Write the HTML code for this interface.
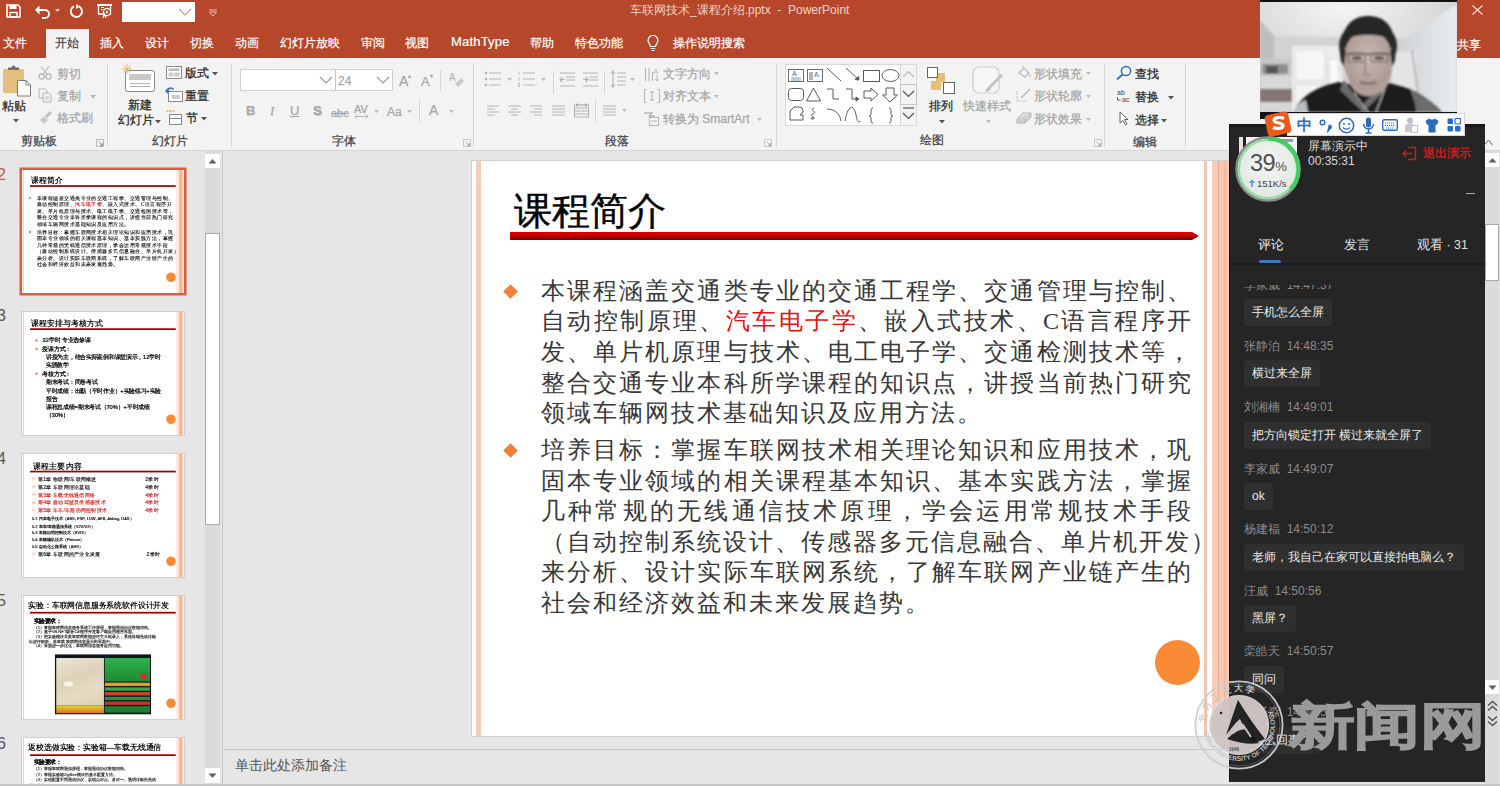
<!DOCTYPE html>
<html><head><meta charset="utf-8">
<style>
*{margin:0;padding:0;box-sizing:border-box}
html,body{width:1500px;height:786px;overflow:hidden;background:#e6e6e6;font-family:"Liberation Sans",sans-serif;}
.a{position:absolute}
.t{position:absolute;white-space:nowrap;line-height:1}
#title{left:0;top:0;width:1500px;height:58px;background:#b7472a}
.tab{position:absolute;top:36px;font-size:12px;color:#fff;line-height:14px;white-space:nowrap;-webkit-text-stroke:0.2px currentColor}
#ribbon{left:0;top:58px;width:1500px;height:93px;background:#f3f3f3;border-bottom:1px solid #d4d4d4}
.sep{position:absolute;width:1px;background:#d5d5d5}
.lbl{position:absolute;font-size:12px;color:#444;white-space:nowrap;line-height:14px;-webkit-text-stroke:0.25px currentColor}
.g{color:#a6a6a6}
#thumbs{left:0;top:151px;width:223px;height:633px;background:#e6e6e6;overflow:hidden}
#main{left:224px;top:151px;width:1261px;height:635px;background:#e6e6e6}
#slide{left:472px;top:161px;width:800px;height:575px;background:#fff;box-shadow:0 0 0 1px #d0d0d0}
.bl{position:absolute;left:69px;width:652px;font-family:"Liberation Serif",serif;font-size:24px;line-height:30px;letter-spacing:2px;color:#383838;white-space:nowrap}
.j{text-align:justify;text-align-last:justify}
#chat{left:1229px;top:124px;width:256px;height:658px;background:#252525;box-shadow:inset 1px 0 0 #141414}
</style></head><body>
<!-- title bar -->
<div id="title" class="a">
  <div class="t" style="left:630px;top:4px;font-size:12px;color:#f2d4cc">车联网技术_课程介绍.pptx&nbsp;&nbsp;-&nbsp;&nbsp;PowerPoint</div>
  <div class="a" style="left:122px;top:2px;width:73px;height:20px;background:#fff"></div>
  <div class="a" style="left:46px;top:29px;width:43px;height:29px;background:#f3f3f3"></div>

  <!-- QAT icons -->
  <svg class="a" style="left:6px;top:4px" width="15" height="14" viewBox="0 0 15 14"><path d="M1 1h11l2 2v10H1z" fill="none" stroke="#fff" stroke-width="1.6"/><rect x="3.5" y="1" width="7" height="4" fill="#fff"/><rect x="4" y="8.5" width="7" height="4.5" fill="none" stroke="#fff" stroke-width="1.4"/></svg>
  <svg class="a" style="left:34px;top:5px" width="28" height="14" viewBox="0 0 28 14"><path d="M3 5h8a4 4 0 0 1 0 8H8" fill="none" stroke="#fff" stroke-width="1.8"/><path d="M1 5l4.5-4.5v9z" fill="#fff"/><path d="M21 4h5l-2.5 3z" fill="#f3d9d2"/></svg>
  <svg class="a" style="left:69px;top:4px" width="15" height="15" viewBox="0 0 15 15"><path d="M9.5 2.2A5.6 5.6 0 1 1 5 2.3" fill="none" stroke="#fff" stroke-width="1.9"/><path d="M7 0l3.5 2.5L7 5z" fill="#fff"/></svg>
  <svg class="a" style="left:96px;top:3px" width="17" height="16" viewBox="0 0 17 16"><rect x="1" y="1" width="15" height="2" fill="#fff"/><path d="M2.5 3v8h12V3" fill="none" stroke="#fff" stroke-width="1.3"/><circle cx="11" cy="9" r="3.6" fill="#b7472a" stroke="#fff" stroke-width="1.2"/><path d="M10 7.3l2.5 1.7-2.5 1.7z" fill="#fff"/><path d="M5 4.5h3M5 6.5h2" stroke="#fff" stroke-width="1"/><path d="M7 15l1.5-4 1.5 4" fill="none" stroke="#fff" stroke-width="1.2"/></svg>
  <svg class="a" style="left:178px;top:8px" width="14" height="9" viewBox="0 0 14 9"><path d="M1 1l6 6 6-6" fill="none" stroke="#c99a8a" stroke-width="1.2"/></svg>
  <svg class="a" style="left:208px;top:8px" width="10" height="9" viewBox="0 0 10 9"><path d="M1 2h8" stroke="#e9b9ab" stroke-width="1"/><path d="M1.5 4h7L5 8z" fill="none" stroke="#e9b9ab" stroke-width="1"/></svg>
  <svg class="a" style="left:1472px;top:5px" width="11" height="10" viewBox="0 0 11 10"><path d="M0.5 0.5l10 9M10.5 0.5l-10 9" stroke="#f6ddd6" stroke-width="1.2"/></svg>
  <div class="tab" style="left:1457px;top:38px">共享</div>
  <svg class="a" style="left:647px;top:35px" width="12" height="17" viewBox="0 0 12 17"><path d="M3.5 11.5C3.2 9 1 8 1 5.5a5 5 0 0 1 10 0C11 8 8.8 9 8.5 11.5z" fill="none" stroke="#fff" stroke-width="1.2"/><path d="M3.8 13.5h4.4M4.5 15.5h3" stroke="#fff" stroke-width="1.1"/></svg>
  <div class="tab" style="left:3px">文件</div>
  <div class="tab" style="left:55px;color:#444">开始</div>
  <div class="tab" style="left:100px">插入</div>
  <div class="tab" style="left:145px">设计</div>
  <div class="tab" style="left:190px">切换</div>
  <div class="tab" style="left:235px">动画</div>
  <div class="tab" style="left:280px">幻灯片放映</div>
  <div class="tab" style="left:361px">审阅</div>
  <div class="tab" style="left:405px">视图</div>
  <div class="tab" style="left:451px;font-size:13px;letter-spacing:0.2px;top:35px">MathType</div>
  <div class="tab" style="left:530px">帮助</div>
  <div class="tab" style="left:575px">特色功能</div>
  <div class="tab" style="left:673px">操作说明搜索</div>
</div>
<!-- ribbon -->
<div id="ribbon" class="a">
  <!-- separators -->
  <div class="sep" style="left:107px;top:6px;height:83px"></div>
  <div class="sep" style="left:231px;top:6px;height:83px"></div>
  <div class="sep" style="left:473px;top:6px;height:83px"></div>
  <div class="sep" style="left:776px;top:6px;height:83px"></div>
  <div class="sep" style="left:1104px;top:6px;height:83px"></div>
  <div class="sep" style="left:1185px;top:6px;height:83px"></div>
  <!-- group labels -->
  <div class="lbl" style="left:21px;top:76px">剪贴板</div>
  <div class="lbl" style="left:152px;top:76px">幻灯片</div>
  <div class="lbl" style="left:332px;top:76px">字体</div>
  <div class="lbl" style="left:605px;top:76px">段落</div>
  <div class="lbl" style="left:920px;top:75px">绘图</div>
  <div class="lbl" style="left:1133px;top:77px">编辑</div>
  <!-- launchers -->
  <svg class="a" style="left:96px;top:81px" width="8" height="8" viewBox="0 0 8 8"><path d="M0.5 0.5h7v7h-7z" fill="none" stroke="#aaa" stroke-width="0.8"/><path d="M2.5 2.5l4 4M6.5 4v2.5H4" fill="none" stroke="#888" stroke-width="0.9"/></svg>
  <svg class="a" style="left:463px;top:81px" width="8" height="8" viewBox="0 0 8 8"><path d="M0.5 0.5h7v7h-7z" fill="none" stroke="#bbb" stroke-width="0.8"/><path d="M2.5 2.5l4 4M6.5 4v2.5H4" fill="none" stroke="#aaa" stroke-width="0.9"/></svg>
  <svg class="a" style="left:764px;top:81px" width="8" height="8" viewBox="0 0 8 8"><path d="M0.5 0.5h7v7h-7z" fill="none" stroke="#bbb" stroke-width="0.8"/><path d="M2.5 2.5l4 4M6.5 4v2.5H4" fill="none" stroke="#aaa" stroke-width="0.9"/></svg>
  <svg class="a" style="left:1094px;top:81px" width="8" height="8" viewBox="0 0 8 8"><path d="M0.5 0.5h7v7h-7z" fill="none" stroke="#bbb" stroke-width="0.8"/><path d="M2.5 2.5l4 4M6.5 4v2.5H4" fill="none" stroke="#aaa" stroke-width="0.9"/></svg>

  <!-- clipboard -->
  <svg class="a" style="left:2px;top:7px" width="30" height="32" viewBox="0 0 30 32"><rect x="1" y="4" width="21" height="24" rx="1.5" fill="#e5bf7d"/><path d="M6 5h11V2.5h-3.5a2 2 0 0 0-4 0H6z" fill="#6e6e6e"/><path d="M15.5 15.5h8.5l4.5 4.5v11h-13z" fill="#fff" stroke="#7a7a7a" stroke-width="1"/><path d="M24 15.5v4.5h4.5" fill="none" stroke="#7a7a7a" stroke-width="1"/></svg>
  <div class="lbl" style="left:2px;top:41px;font-size:12px;color:#262626">粘贴</div>
  <svg class="a" style="left:13px;top:61px" width="6" height="4"><path d="M0 0h6L3 3.5z" fill="#555"/></svg>
  <svg class="a" style="left:38px;top:8px" width="14" height="14" viewBox="0 0 14 14"><circle cx="3.5" cy="10.5" r="2.6" fill="none" stroke="#b4b4b4" stroke-width="1.2"/><circle cx="10.5" cy="10.5" r="2.6" fill="none" stroke="#b4b4b4" stroke-width="1.2"/><path d="M4.8 8.5L11 0.5M9.2 8.5L3 0.5" stroke="#b4b4b4" stroke-width="1.2"/></svg>
  <div class="lbl g" style="left:57px;top:9px">剪切</div>
  <svg class="a" style="left:38px;top:30px" width="14" height="15" viewBox="0 0 14 15"><path d="M1 1h6l2 2v7H1z" fill="#f3f3f3" stroke="#b4b4b4"/><path d="M5 5h6l2 2v7H5z" fill="#f3f3f3" stroke="#b4b4b4"/><path d="M7 9h4M7 11h4" stroke="#c4c4c4"/></svg>
  <div class="lbl g" style="left:57px;top:31px">复制</div>
  <svg class="a" style="left:90px;top:37px" width="6" height="4"><path d="M0 0h6L3 3.5z" fill="#b4b4b4"/></svg>
  <svg class="a" style="left:39px;top:111px;top:53px" width="14" height="13" viewBox="0 0 14 13"><path d="M1 9l4-4 4 4-4 4z" fill="#c8c8c8"/><path d="M6 5l5-5 2 2-5 5z" fill="#bdbdbd"/></svg>
  <div class="lbl g" style="left:57px;top:53px">格式刷</div>

  <!-- slides -->
  <svg class="a" style="left:122px;top:6px" width="34" height="28" viewBox="0 0 34 28"><rect x="3.5" y="6.5" width="29" height="21" rx="2.5" fill="#fff" stroke="#8a8a8a" stroke-width="1"/><rect x="7" y="10" width="22" height="6" fill="#c9c9c9"/><path d="M8 19.5h20M8 22.5h20" stroke="#b5b5b5" stroke-width="1"/><path d="M5 0v10M0 5h10M1.5 1.5l7 7M8.5 1.5l-7 7" stroke="#f2b36b" stroke-width="1"/></svg>
  <div class="lbl" style="left:128px;top:40px;font-size:12px;color:#262626">新建</div>
  <div class="lbl" style="left:118px;top:55px;font-size:12px;color:#262626">幻灯片</div>
  <svg class="a" style="left:155px;top:62px" width="6" height="4"><path d="M0 0h6L3 3.5z" fill="#555"/></svg>
  <svg class="a" style="left:166px;top:8px" width="16" height="13" viewBox="0 0 16 13"><rect x="0.5" y="0.5" width="15" height="12" fill="#fff" stroke="#888"/><rect x="2.5" y="2.5" width="11" height="2.5" fill="#bbb"/><rect x="2.5" y="6.5" width="5" height="4" fill="#ccc"/><rect x="8.5" y="6.5" width="5" height="4" fill="#ccc"/></svg>
  <div class="lbl" style="left:185px;top:8px;font-size:12px;color:#262626">版式</div>
  <svg class="a" style="left:212px;top:14px" width="6" height="4"><path d="M0 0h6L3 3.5z" fill="#555"/></svg>
  <svg class="a" style="left:165px;top:29px" width="18" height="15" viewBox="0 0 18 15"><rect x="3.5" y="4.5" width="14" height="10" fill="#fff" stroke="#888"/><rect x="7" y="8" width="8" height="4" fill="#ccc"/><path d="M1.5 5.5a4 4 0 0 1 7-3" fill="none" stroke="#2f6fb8" stroke-width="1.5"/><path d="M0 3l2.5 3.5 2.5-3z" fill="#2f6fb8"/></svg>
  <div class="lbl" style="left:185px;top:31px;font-size:12px;color:#262626">重置</div>
  <svg class="a" style="left:166px;top:52px" width="17" height="15" viewBox="0 0 17 15"><path d="M0.5 1h9" stroke="#f2b36b" stroke-width="2" stroke-dasharray="2 1"/><rect x="3.5" y="4.5" width="12" height="10" fill="#fff" stroke="#888"/><path d="M3.5 8.5h12" stroke="#888"/></svg>
  <div class="lbl" style="left:186px;top:53px;font-size:12px;color:#262626">节</div>
  <svg class="a" style="left:201px;top:59px" width="6" height="4"><path d="M0 0h6L3 3.5z" fill="#555"/></svg>

  <!-- font -->
  <div class="a" style="left:240px;top:11px;width:153px;height:22px;background:#fff;border:1px solid #d0d0d0"></div>
  <div class="a" style="left:335px;top:12px;width:1px;height:20px;background:#c8c8c8"></div>
  <svg class="a" style="left:319px;top:18px" width="14" height="8"><path d="M1 1l6 6 6-6" fill="none" stroke="#999" stroke-width="1.1"/></svg>
  <svg class="a" style="left:376px;top:18px" width="14" height="8"><path d="M1 1l6 6 6-6" fill="none" stroke="#999" stroke-width="1.1"/></svg>
  <div class="lbl g" style="left:338px;top:16px;font-size:12px">24</div>
  <div class="lbl g" style="left:399px;top:11px;font-size:14px;line-height:14px">A<sup style="font-size:6px;vertical-align:8px">▴</sup></div>
  <div class="lbl g" style="left:421px;top:11px;font-size:13px;line-height:14px">A<sup style="font-size:6px;vertical-align:8px">▾</sup></div>
  <div class="sep" style="left:440px;top:12px;height:21px"></div>
  <svg class="a" style="left:449px;top:14px" width="15" height="16" viewBox="0 0 15 16"><text x="0" y="9" font-size="10" fill="#b0b0b0" font-family="Liberation Sans">A</text><path d="M6 12l6-6 3 3-6 6z" fill="#c7c7c7"/></svg>
  <div class="lbl g" style="left:246px;top:46px;font-size:13px;font-weight:bold">B</div>
  <div class="lbl g" style="left:270px;top:46px;font-size:13px;font-style:italic;font-family:'Liberation Serif',serif">I</div>
  <div class="lbl g" style="left:290px;top:46px;font-size:13px;text-decoration:underline">U</div>
  <div class="lbl g" style="left:313px;top:46px;font-size:13px;font-weight:bold;text-shadow:1px 1px 0 #d0d0d0">S</div>
  <div class="lbl g" style="left:331px;top:48px;font-size:11px;text-decoration:line-through">abc</div>
  <div class="lbl g" style="left:354px;top:44px;font-size:11px">AV</div>
  <svg class="a" style="left:354px;top:56px" width="15" height="5"><path d="M1 2.5h13M1 2.5l2-2M1 2.5l2 2M14 2.5l-2-2M14 2.5l-2 2" stroke="#b0b0b0" stroke-width="0.9" fill="none"/></svg>
  <svg class="a" style="left:374px;top:52px" width="5" height="3"><path d="M0 0h5L2.5 3z" fill="#bbb"/></svg>
  <div class="lbl g" style="left:387px;top:47px;font-size:12px">Aa</div>
  <svg class="a" style="left:407px;top:52px" width="5" height="3"><path d="M0 0h5L2.5 3z" fill="#bbb"/></svg>
  <div class="sep" style="left:419px;top:42px;height:22px"></div>
  <div class="lbl g" style="left:429px;top:45px;font-size:14px">A</div>
  <svg class="a" style="left:449px;top:52px" width="5" height="3"><path d="M0 0h5L2.5 3z" fill="#bbb"/></svg>

  <!-- paragraph -->
  <svg class="a" style="left:484px;top:13px" width="30" height="16" viewBox="0 0 30 16"><circle cx="2" cy="2" r="1.3" fill="#b4b4b4"/><circle cx="2" cy="8" r="1.3" fill="#b4b4b4"/><circle cx="2" cy="14" r="1.3" fill="#b4b4b4"/><path d="M5 2h12" stroke="#b4b4b4" stroke-width="1"/><path d="M5 8h12" stroke="#b4b4b4" stroke-width="1"/><path d="M5 14h12" stroke="#b4b4b4" stroke-width="1"/><path d="M23 7h5l-2.5 3z" fill="#bbb"/></svg>
  <svg class="a" style="left:518px;top:13px" width="30" height="16" viewBox="0 0 30 16"><path d="M1 0.5v3M1 6v3.5M0 12.5h2l-2 3h2" stroke="#b4b4b4" stroke-width="0.9" fill="none"/><path d="M5 2h12" stroke="#b4b4b4" stroke-width="1"/><path d="M5 8h12" stroke="#b4b4b4" stroke-width="1"/><path d="M5 14h12" stroke="#b4b4b4" stroke-width="1"/><path d="M23 7h5l-2.5 3z" fill="#bbb"/></svg>
  <div class="sep" style="left:553px;top:13px;height:23px"></div>
  <svg class="a" style="left:559px;top:14px" width="17" height="15" viewBox="0 0 17 15"><path d="M1 1h15" stroke="#b4b4b4" stroke-width="1"/><path d="M7 5h9" stroke="#b4b4b4" stroke-width="1"/><path d="M7 8h9" stroke="#b4b4b4" stroke-width="1"/><path d="M1 14h15" stroke="#b4b4b4" stroke-width="1"/><path d="M6 7.5H1M3.5 5L1 7.5 3.5 10" stroke="#b4b4b4" fill="none" stroke-width="1.2"/></svg>
  <svg class="a" style="left:582px;top:14px" width="17" height="15" viewBox="0 0 17 15"><path d="M1 1h15" stroke="#b4b4b4" stroke-width="1"/><path d="M7 5h9" stroke="#b4b4b4" stroke-width="1"/><path d="M7 8h9" stroke="#b4b4b4" stroke-width="1"/><path d="M1 14h15" stroke="#b4b4b4" stroke-width="1"/><path d="M1 7.5H6M3.5 5L6 7.5 3.5 10" stroke="#b4b4b4" fill="none" stroke-width="1.2"/></svg>
  <div class="sep" style="left:604px;top:13px;height:23px"></div>
  <svg class="a" style="left:610px;top:12px" width="28" height="18" viewBox="0 0 28 18"><path d="M3 1v16M1 3.5L3 1l2 2.5M1 14.5L3 17l2-2.5" stroke="#b4b4b4" fill="none" stroke-width="1.1"/><path d="M7 3h9" stroke="#b4b4b4" stroke-width="1"/><path d="M7 7h9" stroke="#b4b4b4" stroke-width="1"/><path d="M7 11h9" stroke="#b4b4b4" stroke-width="1"/><path d="M7 15h9" stroke="#b4b4b4" stroke-width="1"/><path d="M20 8h5l-2.5 3z" fill="#bbb"/></svg>
  <svg class="a" style="left:644px;top:8px" width="16" height="15" viewBox="0 0 16 15"><path d="M1.5 2v13M5 2v13M8.5 6v9" stroke="#b4b4b4" stroke-width="1.1"/><text x="9" y="8" font-size="8" font-family="Liberation Sans" fill="#b4b4b4">A</text><path d="M13 9v6M11.5 13l1.5 2 1.5-2" stroke="#b4b4b4" fill="none"/></svg>
  <div class="lbl g" style="left:663px;top:9px;font-size:12px">文字方向</div>
  <svg class="a" style="left:714px;top:14px" width="5" height="3"><path d="M0 0h5L2.5 3z" fill="#bbb"/></svg>
  <svg class="a" style="left:644px;top:31px" width="16" height="14" viewBox="0 0 16 14"><path d="M3 0.5H0.5v13H3M13 0.5h2.5v13H13" stroke="#b4b4b4" fill="none"/><path d="M8 2v10M6 4l2-2 2 2M6 10l2 2 2-2" stroke="#b4b4b4" fill="none"/></svg>
  <div class="lbl g" style="left:663px;top:31px;font-size:12px">对齐文本</div>
  <svg class="a" style="left:714px;top:37px" width="5" height="3"><path d="M0 0h5L2.5 3z" fill="#bbb"/></svg>
  <svg class="a" style="left:643px;top:54px" width="17" height="14" viewBox="0 0 17 14"><path d="M1 1h8l-3 3h6" stroke="#b4b4b4" fill="none" stroke-width="1.3"/><rect x="6.5" y="5.5" width="9" height="8" fill="none" stroke="#b4b4b4"/><path d="M8 9h6" stroke="#b4b4b4"/></svg>
  <div class="lbl g" style="left:663px;top:54px;font-size:12px">转换为 SmartArt</div>
  <svg class="a" style="left:757px;top:60px" width="5" height="3"><path d="M0 0h5L2.5 3z" fill="#bbb"/></svg>
  <svg class="a" style="left:487px;top:47px" width="13" height="11" viewBox="0 0 13 11"><path d="M0 1h12" stroke="#b4b4b4" stroke-width="1"/><path d="M0 4h8" stroke="#b4b4b4" stroke-width="1"/><path d="M0 7h12" stroke="#b4b4b4" stroke-width="1"/><path d="M0 10h8" stroke="#b4b4b4" stroke-width="1"/></svg>
  <svg class="a" style="left:508px;top:47px" width="14" height="11" viewBox="0 0 14 11"><path d="M0 1h13" stroke="#b4b4b4" stroke-width="1"/><path d="M3 4h7" stroke="#b4b4b4" stroke-width="1"/><path d="M0 7h13" stroke="#b4b4b4" stroke-width="1"/><path d="M3 10h7" stroke="#b4b4b4" stroke-width="1"/></svg>
  <svg class="a" style="left:530px;top:47px" width="13" height="11" viewBox="0 0 13 11"><path d="M0 1h12" stroke="#b4b4b4" stroke-width="1"/><path d="M4 4h8" stroke="#b4b4b4" stroke-width="1"/><path d="M0 7h12" stroke="#b4b4b4" stroke-width="1"/><path d="M4 10h8" stroke="#b4b4b4" stroke-width="1"/></svg>
  <svg class="a" style="left:552px;top:47px" width="14" height="11" viewBox="0 0 14 11"><path d="M0 1h13" stroke="#b4b4b4" stroke-width="1"/><path d="M0 4h13" stroke="#b4b4b4" stroke-width="1"/><path d="M0 7h13" stroke="#b4b4b4" stroke-width="1"/><path d="M0 10h13" stroke="#b4b4b4" stroke-width="1"/></svg>
  <svg class="a" style="left:574px;top:45px" width="15" height="15" viewBox="0 0 15 15"><path d="M0.5 0.5v14M14.5 0.5v14" stroke="#b4b4b4"/><path d="M1 5h13" stroke="#b4b4b4" stroke-width="1"/><path d="M1 8h13" stroke="#b4b4b4" stroke-width="1"/><path d="M1 11h13" stroke="#b4b4b4" stroke-width="1"/><path d="M1 14h13" stroke="#b4b4b4" stroke-width="1"/><path d="M2 2h11M4 0.5L2 2l2 1.5M11 0.5L13 2l-2 1.5" stroke="#999" fill="none"/></svg>
  <div class="sep" style="left:595px;top:42px;height:22px"></div>
  <svg class="a" style="left:603px;top:47px" width="24" height="11" viewBox="0 0 24 11"><path d="M0 1h13" stroke="#b4b4b4" stroke-width="1"/><path d="M0 4h13" stroke="#b4b4b4" stroke-width="1"/><path d="M0 7h13" stroke="#b4b4b4" stroke-width="1"/><path d="M0 10h13" stroke="#b4b4b4" stroke-width="1"/><path d="M19 4h5l-2.5 3z" fill="#bbb"/></svg>

  <!-- drawing -->
  <div class="a" style="left:785px;top:6px;width:132px;height:62px;background:#fff;border:1px solid #d9d9d9"></div>
  <div class="a" style="left:900px;top:6px;width:17px;height:62px;background:#f3f3f3;border:1px solid #d9d9d9"></div>
  <div class="a" style="left:900px;top:26px;width:17px;height:21px;border:1px solid #c6c6c6;background:#f3f3f3"></div>
  <svg class="a" style="left:901px;top:11px" width="15" height="10"><path d="M2 8l5.5-5.5L13 8" fill="none" stroke="#bdbdbd" stroke-width="1.2"/></svg>
  <svg class="a" style="left:901px;top:31px" width="15" height="10"><path d="M2 2l5.5 5.5L13 2" fill="none" stroke="#555" stroke-width="1.2"/></svg>
  <svg class="a" style="left:901px;top:48px" width="15" height="18"><path d="M2 2h11" stroke="#555" stroke-width="1.2"/><path d="M2 7l5.5 5.5L13 7" fill="none" stroke="#555" stroke-width="1.2"/></svg>
  <svg class="a" style="left:786px;top:8px" width="114" height="60" viewBox="0 0 114 60" fill="none" stroke="#5a5a5a" stroke-width="1">
    <rect x="2.5" y="3.5" width="15" height="12" stroke="#6a6a6a"/><path d="M5 12h10M5 14h10" stroke="#7aa0cc"/><text x="6" y="10" font-size="7" fill="#2f6fb8" stroke="none" font-family="Liberation Sans">A</text>
    <rect x="21.5" y="3.5" width="15" height="12" stroke="#6a6a6a"/><path d="M24 6v8M26 6v8" stroke="#6a6a6a"/><text x="28" y="11" font-size="7" fill="#2f6fb8" stroke="none" font-family="Liberation Sans">A</text>
    <path d="M41 2l14 13"/>
    <path d="M60 2l13 12"/><path d="M73 14l-4-0.5 3.5-3z" fill="#5a5a5a"/>
    <rect x="77.5" y="4.5" width="16" height="11"/>
    <ellipse cx="104.5" cy="9.5" rx="8.5" ry="6"/>
    <rect x="2.5" y="22.5" width="15" height="12" rx="3"/>
    <path d="M27.5 22l-7 13h14z"/>
    <path d="M41 23h6v10h6"/>
    <path d="M60 23h6v10h5"/><path d="M73 33l-3-2v4z" fill="#5a5a5a"/>
    <path d="M78 25h7v-3l7 6.5-7 6.5v-3h-7z"/>
    <path d="M100 22h8v7h3.5l-7.5 7-7.5-7h3.5z"/>
    <path d="M4 54v-9l4-4h5a4 4 0 0 1 4 4v1l-3 3h3v5z"/>
    <path d="M28 42c-5 2 4 4-1 6s4 3 0 5c-3 1-2-3 1-1"/>
    <path d="M41 43c8 0 13 5 14 12"/>
    <path d="M59 55c3-17 9-17 11-6s5 6 4 6"/>
    <path d="M87 42c-2 0-2 2-2 5s-1 3-2 3c1 0 2 0 2 3s0 4 2 4"/>
    <path d="M103 42c2 0 2 2 2 5s1 3 2 3c-1 0-2 0-2 3s0 4-2 4"/>
  </svg>
  <svg class="a" style="left:926px;top:8px" width="30" height="29" viewBox="0 0 30 29"><rect x="10" y="7" width="9" height="9" fill="#e9bf73"/><rect x="5" y="15" width="10" height="9" fill="#e9bf73"/><rect x="1.5" y="1.5" width="10" height="10" fill="#fff" stroke="#666"/><rect x="17.5" y="16.5" width="11" height="11" fill="#fff" stroke="#666"/></svg>
  <div class="lbl" style="left:929px;top:41px;font-size:12px;color:#262626">排列</div>
  <svg class="a" style="left:939px;top:62px" width="6" height="4"><path d="M0 0h6L3 3.5z" fill="#555"/></svg>
  <svg class="a" style="left:972px;top:8px" width="32" height="31" viewBox="0 0 32 31"><rect x="1" y="1" width="26" height="26" rx="6" fill="#f6f6f6" stroke="#cfcfcf" stroke-width="1.2"/><path d="M30 9L17 22" stroke="#c4c4c4" stroke-width="3"/><path d="M18 21c-3 0-4 2-5 5 3 0 5-1 6-3z" fill="#c4c4c4"/></svg>
  <div class="lbl g" style="left:963px;top:41px;font-size:12px">快速样式</div>
  <svg class="a" style="left:986px;top:62px" width="5" height="3"><path d="M0 0h5L2.5 3z" fill="#bbb"/></svg>
  <svg class="a" style="left:1017px;top:8px" width="15" height="14" viewBox="0 0 15 14"><path d="M2 7l5-5 5 5-4 4z" fill="none" stroke="#b4b4b4" stroke-width="1.1"/><path d="M5 1l2-1" stroke="#b4b4b4"/><path d="M13 8c1 2 1 3 0 3s-1-1 0-3" fill="#b4b4b4"/></svg>
  <div class="lbl g" style="left:1034px;top:9px;font-size:12px">形状填充</div>
  <svg class="a" style="left:1086px;top:14px" width="5" height="3"><path d="M0 0h5L2.5 3z" fill="#bbb"/></svg>
  <svg class="a" style="left:1016px;top:30px" width="16" height="14" viewBox="0 0 16 14"><path d="M1 3v10h10" fill="none" stroke="#b4b4b4" stroke-dasharray="1.5 1"/><path d="M5 10L14 1" stroke="#b4b4b4" stroke-width="1.3"/></svg>
  <div class="lbl g" style="left:1034px;top:31px;font-size:12px">形状轮廓</div>
  <svg class="a" style="left:1086px;top:37px" width="5" height="3"><path d="M0 0h5L2.5 3z" fill="#bbb"/></svg>
  <svg class="a" style="left:1016px;top:53px" width="16" height="14" viewBox="0 0 16 14"><path d="M1 8l6-6h8l-6 6z" fill="#e3e3e3" stroke="#b4b4b4"/><path d="M1 8v4h8l6-6V2M9 8v4" fill="#d0d0d0" stroke="#b4b4b4"/></svg>
  <div class="lbl g" style="left:1034px;top:54px;font-size:12px">形状效果</div>
  <svg class="a" style="left:1086px;top:60px" width="5" height="3"><path d="M0 0h5L2.5 3z" fill="#bbb"/></svg>
  <!-- editing -->
  <svg class="a" style="left:1116px;top:7px" width="16" height="15" viewBox="0 0 16 15"><circle cx="10" cy="6" r="4.6" fill="none" stroke="#2f6fb8" stroke-width="1.5"/><path d="M6.5 9.5L1 14.5" stroke="#2f6fb8" stroke-width="1.8"/></svg>
  <div class="lbl" style="left:1135px;top:9px;font-size:12px;color:#262626">查找</div>
  <svg class="a" style="left:1116px;top:31px" width="16" height="14" viewBox="0 0 16 14"><text x="1" y="6" font-size="7" font-family="Liberation Sans" fill="#444">ab</text><text x="6" y="13" font-size="7" font-family="Liberation Sans" fill="#444">ac</text><path d="M1.5 8v3h3" fill="none" stroke="#2f6fb8"/></svg>
  <div class="lbl" style="left:1135px;top:32px;font-size:12px;color:#262626">替换</div>
  <svg class="a" style="left:1168px;top:38px" width="6" height="4"><path d="M0 0h6L3 3.5z" fill="#555"/></svg>
  <svg class="a" style="left:1119px;top:53px" width="10" height="15" viewBox="0 0 10 15"><path d="M1 1v11l3-2.5 2.5 4.5 1.5-1-2.5-4.5H9z" fill="#fff" stroke="#555" stroke-width="0.9"/></svg>
  <div class="lbl" style="left:1135px;top:55px;font-size:12px;color:#262626">选择</div>
  <svg class="a" style="left:1161px;top:61px" width="6" height="4"><path d="M0 0h6L3 3.5z" fill="#555"/></svg>
</div>
<!-- thumbnails -->
<div id="thumbs" class="a">
  <div class="t" style="left:-3px;top:16px;font-size:16px;color:#c5573a">2</div>
  <div class="t" style="left:-3px;top:157px;font-size:16px;color:#555">3</div>
  <div class="t" style="left:-3px;top:300px;font-size:16px;color:#555">4</div>
  <div class="t" style="left:-3px;top:442px;font-size:16px;color:#555">5</div>
  <div class="t" style="left:-3px;top:585px;font-size:16px;color:#555">6</div>
  <div class="a" style="left:22px;top:19px;width:162px;height:123px;background:#fff;box-shadow:0 0 0 2.5px #db5f3c;overflow:hidden"><div class="a" style="left:0;top:0;width:767px;height:575px;transform:scale(0.2112,0.2139);transform-origin:0 0"><div class="a" style="left:4px;top:0;width:5px;height:575px;background:#f6cbb8"></div>
<div class="a" style="left:732px;top:0;width:3px;height:575px;background:#f4c5b0"></div>
<div class="a" style="left:740px;top:0;width:24px;height:575px;background:#f9d0be"></div>
<div class="a" style="left:746px;top:0;width:10px;height:575px;background:#f4b090"></div>
<div class="a" style="left:683px;top:479px;width:45px;height:45px;border-radius:50%;background:#fb8a36"></div><div class="t" style="left:42px;top:28px;font-size:38px;font-weight:bold;color:#000;line-height:42px">课程简介</div><div class="a" style="left:38px;top:71px;width:690px;height:8px;background:linear-gradient(#c00000,#700000)"></div><svg class="a" style="left:30px;top:123px" width="15" height="15" viewBox="0 0 15 15"><path d="M7.5 0.5L14.5 7.5 7.5 14.5 0.5 7.5z" fill="#f27f3a"/></svg><svg class="a" style="left:30px;top:282px" width="15" height="15" viewBox="0 0 15 15"><path d="M7.5 0.5L14.5 7.5 7.5 14.5 0.5 7.5z" fill="#f27f3a"/></svg><div style="font-family:'Liberation Serif',serif;font-size:24px;line-height:30px;letter-spacing:2px;color:#111;white-space:nowrap;-webkit-text-stroke:0.5px #111;position:absolute;left:69px;top:114.6px">本课程涵盖交通类专业的交通工程学、交通管理与控制、</div><div style="font-family:'Liberation Serif',serif;font-size:24px;line-height:30px;letter-spacing:2px;color:#111;white-space:nowrap;-webkit-text-stroke:0.5px #111;position:absolute;left:69px;top:145.2px">自动控制原理、<span style="color:#e81010;-webkit-text-stroke-color:#e81010">汽车电子学</span>、嵌入式技术、C语言程序开</div><div style="font-family:'Liberation Serif',serif;font-size:24px;line-height:30px;letter-spacing:2px;color:#111;white-space:nowrap;-webkit-text-stroke:0.5px #111;position:absolute;left:69px;top:175.8px">发、单片机原理与技术、电工电子学、交通检测技术等，</div><div style="font-family:'Liberation Serif',serif;font-size:24px;line-height:30px;letter-spacing:2px;color:#111;white-space:nowrap;-webkit-text-stroke:0.5px #111;position:absolute;left:69px;top:206.4px">整合交通专业本科所学课程的知识点，讲授当前热门研究</div><div style="font-family:'Liberation Serif',serif;font-size:24px;line-height:30px;letter-spacing:2px;color:#111;white-space:nowrap;-webkit-text-stroke:0.5px #111;position:absolute;left:69px;top:237.0px">领域车辆网技术基础知识及应用方法。</div><div style="font-family:'Liberation Serif',serif;font-size:24px;line-height:30px;letter-spacing:2px;color:#111;white-space:nowrap;-webkit-text-stroke:0.5px #111;position:absolute;left:69px;top:273.6px">培养目标：掌握车联网技术相关理论知识和应用技术，巩</div><div style="font-family:'Liberation Serif',serif;font-size:24px;line-height:30px;letter-spacing:2px;color:#111;white-space:nowrap;-webkit-text-stroke:0.5px #111;position:absolute;left:69px;top:304.2px">固本专业领域的相关课程基本知识、基本实践方法，掌握</div><div style="font-family:'Liberation Serif',serif;font-size:24px;line-height:30px;letter-spacing:2px;color:#111;white-space:nowrap;-webkit-text-stroke:0.5px #111;position:absolute;left:69px;top:334.8px">几种常规的无线通信技术原理，学会运用常规技术手段</div><div style="font-family:'Liberation Serif',serif;font-size:24px;line-height:30px;letter-spacing:2px;color:#111;white-space:nowrap;-webkit-text-stroke:0.5px #111;position:absolute;left:69px;top:365.4px">（自动控制系统设计、传感器多元信息融合、单片机开发）</div><div style="font-family:'Liberation Serif',serif;font-size:24px;line-height:30px;letter-spacing:2px;color:#111;white-space:nowrap;-webkit-text-stroke:0.5px #111;position:absolute;left:69px;top:396.0px">来分析、设计实际车联网系统，了解车联网产业链产生的</div><div style="font-family:'Liberation Serif',serif;font-size:24px;line-height:30px;letter-spacing:2px;color:#111;white-space:nowrap;-webkit-text-stroke:0.5px #111;position:absolute;left:69px;top:426.6px">社会和经济效益和未来发展趋势。</div></div></div>
  <div class="a" style="left:22px;top:161px;width:162px;height:123px;background:#fff;box-shadow:0 0 0 1px #cfcfcf;overflow:hidden"><div class="a" style="left:0;top:0;width:767px;height:575px;transform:scale(0.2112,0.2139);transform-origin:0 0"><div class="a" style="left:4px;top:0;width:5px;height:575px;background:#f6cbb8"></div>
<div class="a" style="left:732px;top:0;width:3px;height:575px;background:#f4c5b0"></div>
<div class="a" style="left:740px;top:0;width:24px;height:575px;background:#f9d0be"></div>
<div class="a" style="left:746px;top:0;width:10px;height:575px;background:#f4b090"></div>
<div class="a" style="left:683px;top:479px;width:45px;height:45px;border-radius:50%;background:#fb8a36"></div><div class="t" style="left:43px;top:31px;font-size:38px;font-weight:bold;color:#000;line-height:42px">课程安排与考核方式</div><div class="a" style="left:38px;top:76px;width:690px;height:8px;background:linear-gradient(#c00000,#700000)"></div><div class="a" style="left:63px;top:127px;width:12px;height:12px;border-radius:50%;background:#f27f3a"></div><div class="t" style="left:97px;top:118.5px;font-size:27px;line-height:29px;color:#000;-webkit-text-stroke:1.0px #000;">32学时 专业选修课</div><div class="a" style="left:63px;top:167px;width:12px;height:12px;border-radius:50%;background:#f27f3a"></div><div class="t" style="left:97px;top:158.5px;font-size:27px;line-height:29px;color:#000;-webkit-text-stroke:1.0px #000;">授课方式：</div><div class="t" style="left:114px;top:198.5px;font-size:27px;line-height:29px;color:#000;-webkit-text-stroke:1.0px #000;">讲授为主，结合实际案例和课堂演示，12学时</div><div class="t" style="left:114px;top:234.5px;font-size:27px;line-height:29px;color:#000;-webkit-text-stroke:1.0px #000;">实践教学</div><div class="a" style="left:63px;top:283px;width:12px;height:12px;border-radius:50%;background:#f27f3a"></div><div class="t" style="left:97px;top:274.5px;font-size:27px;line-height:29px;color:#000;-webkit-text-stroke:1.0px #000;">考核方式：</div><div class="t" style="left:114px;top:314.5px;font-size:27px;line-height:29px;color:#000;-webkit-text-stroke:1.0px #000;">期末考试：闭卷考试</div><div class="t" style="left:114px;top:354.5px;font-size:27px;line-height:29px;color:#000;-webkit-text-stroke:1.0px #000;">平时成绩：出勤（平时作业）+实验练习+实验</div><div class="t" style="left:114px;top:391.5px;font-size:27px;line-height:29px;color:#000;-webkit-text-stroke:1.0px #000;">报告</div><div class="t" style="left:114px;top:431.5px;font-size:27px;line-height:29px;color:#000;-webkit-text-stroke:1.0px #000;">课程总成绩=期末考试（70%）+平时成绩</div><div class="t" style="left:114px;top:467.5px;font-size:27px;line-height:29px;color:#000;-webkit-text-stroke:1.0px #000;">（30%）</div></div></div>
  <div class="a" style="left:22px;top:303px;width:162px;height:123px;background:#fff;box-shadow:0 0 0 1px #cfcfcf;overflow:hidden"><div class="a" style="left:0;top:0;width:767px;height:575px;transform:scale(0.2112,0.2139);transform-origin:0 0"><div class="a" style="left:4px;top:0;width:5px;height:575px;background:#f6cbb8"></div>
<div class="a" style="left:732px;top:0;width:3px;height:575px;background:#f4c5b0"></div>
<div class="a" style="left:740px;top:0;width:24px;height:575px;background:#f9d0be"></div>
<div class="a" style="left:746px;top:0;width:10px;height:575px;background:#f4b090"></div>
<div class="a" style="left:683px;top:479px;width:45px;height:45px;border-radius:50%;background:#fb8a36"></div><div class="t" style="left:54px;top:35px;font-size:38px;font-weight:bold;color:#000;line-height:42px">课程主要内容</div><div class="a" style="left:38px;top:78px;width:690px;height:8px;background:linear-gradient(#c00000,#700000)"></div><div class="a" style="left:49px;top:110px;width:12px;height:12px;border-radius:50%;border:2.5px solid #f27f3a"></div><div class="t" style="left:76px;top:102.5px;font-size:25px;line-height:27px;color:#111;-webkit-text-stroke:0.6px #111;">第1章  物联网/车联网概述</div><div class="t" style="left:584px;top:102.5px;font-size:25px;line-height:27px;color:#111;-webkit-text-stroke:0.6px #111;">2学时</div><div class="a" style="left:49px;top:147px;width:12px;height:12px;border-radius:50%;border:2.5px solid #f27f3a"></div><div class="t" style="left:76px;top:139.5px;font-size:25px;line-height:27px;color:#111;-webkit-text-stroke:0.6px #111;">第2章  车联网理论基础</div><div class="t" style="left:584px;top:139.5px;font-size:25px;line-height:27px;color:#111;-webkit-text-stroke:0.6px #111;">4学时</div><div class="a" style="left:49px;top:184px;width:12px;height:12px;border-radius:50%;border:2.5px solid #f27f3a"></div><div class="t" style="left:76px;top:176.5px;font-size:25px;line-height:27px;color:#e02020;-webkit-text-stroke:0.6px #e02020;">第3章  车载无线通信网络</div><div class="t" style="left:584px;top:176.5px;font-size:25px;line-height:27px;color:#e02020;-webkit-text-stroke:0.6px #e02020;">4学时</div><div class="a" style="left:49px;top:221px;width:12px;height:12px;border-radius:50%;border:2.5px solid #f27f3a"></div><div class="t" style="left:76px;top:213.5px;font-size:25px;line-height:27px;color:#e02020;-webkit-text-stroke:0.6px #e02020;">第4章  自动驾驶及传感器技术</div><div class="t" style="left:584px;top:213.5px;font-size:25px;line-height:27px;color:#e02020;-webkit-text-stroke:0.6px #e02020;">4学时</div><div class="a" style="left:49px;top:257px;width:12px;height:12px;border-radius:50%;border:2.5px solid #f27f3a"></div><div class="t" style="left:76px;top:249.5px;font-size:25px;line-height:27px;color:#e02020;-webkit-text-stroke:0.6px #e02020;">第5章  车车/车路协同控制技术</div><div class="t" style="left:584px;top:249.5px;font-size:25px;line-height:27px;color:#e02020;-webkit-text-stroke:0.6px #e02020;">4学时</div><div class="t" style="left:47px;top:292.5px;font-size:19px;line-height:21px;color:#111;-webkit-text-stroke:0.8px #111;">5.1 汽车电子技术（ABS, ESP, LDW, AEB, Airbag, DAS）</div><div class="t" style="left:47px;top:326.5px;font-size:19px;line-height:21px;color:#111;-webkit-text-stroke:0.8px #111;">5.2 车车/车路通信系统（V2V/V2I）</div><div class="t" style="left:47px;top:357.5px;font-size:19px;line-height:21px;color:#111;-webkit-text-stroke:0.8px #111;">5.3 车路协同控制技术（BVIS）</div><div class="t" style="left:47px;top:389.5px;font-size:19px;line-height:21px;color:#111;-webkit-text-stroke:0.8px #111;">5.4 车辆编队技术（Platoon）</div><div class="t" style="left:47px;top:421.5px;font-size:19px;line-height:21px;color:#111;-webkit-text-stroke:0.8px #111;">5.5 自动化公路系统（AHS）</div><div class="a" style="left:49px;top:460px;width:12px;height:12px;border-radius:50%;border:2.5px solid #f27f3a"></div><div class="t" style="left:76px;top:452.5px;font-size:25px;line-height:27px;color:#111;-webkit-text-stroke:0.6px #111;">第6章  车联网的产业化发展</div><div class="t" style="left:590px;top:452.5px;font-size:25px;line-height:27px;color:#111;-webkit-text-stroke:0.6px #111;">2学时</div></div></div>
  <div class="a" style="left:22px;top:445px;width:162px;height:123px;background:#fff;box-shadow:0 0 0 1px #cfcfcf;overflow:hidden"><div class="a" style="left:0;top:0;width:767px;height:575px;transform:scale(0.2112,0.2139);transform-origin:0 0"><div class="a" style="left:4px;top:0;width:5px;height:575px;background:#f6cbb8"></div>
<div class="a" style="left:732px;top:0;width:3px;height:575px;background:#f4c5b0"></div>
<div class="a" style="left:740px;top:0;width:24px;height:575px;background:#f9d0be"></div>
<div class="a" style="left:746px;top:0;width:10px;height:575px;background:#f4b090"></div>
<div class="a" style="left:683px;top:479px;width:45px;height:45px;border-radius:50%;background:#fb8a36"></div><div class="t" style="left:30px;top:22px;font-size:37px;font-weight:bold;color:#000;line-height:41px">实验：车联网信息服务系统软件设计开发</div><div class="a" style="left:38px;top:74px;width:690px;height:8px;background:linear-gradient(#c00000,#700000)"></div><div class="t" style="left:55px;top:104.0px;font-size:26px;line-height:28px;color:#000;-webkit-text-stroke:0.5px #000;font-weight:bold;">实验要求：</div><div class="t" style="left:55px;top:136.5px;font-size:19px;line-height:21px;color:#222;-webkit-text-stroke:0.6px #222;">（1）掌握车联网信息服务系统工作原理，掌握通信协议数据结构。</div><div class="t" style="left:55px;top:158.0px;font-size:19px;line-height:21px;color:#222;-webkit-text-stroke:0.6px #222;">（2）基于VB.NET或者C#程序开发客户端应用程序界面。</div><div class="t" style="left:55px;top:179.5px;font-size:19px;line-height:21px;color:#222;-webkit-text-stroke:0.6px #222;">（3）把实验模块采集车联网数据进行文本框录入，系统终端无线传输</div><div class="t" style="left:35px;top:201.0px;font-size:19px;line-height:21px;color:#222;-webkit-text-stroke:0.6px #222;">以进行解析，将车载车联网信息显示到界面中。</div><div class="t" style="left:55px;top:222.5px;font-size:19px;line-height:21px;color:#222;-webkit-text-stroke:0.6px #222;">（4）界面进一步优化，车联网信息服务应用功能。</div><div class="a" style="left:156px;top:273px;width:455px;height:280px;background:#0c1420"></div>
<div class="a" style="left:162px;top:290px;width:226px;height:222px;background:linear-gradient(160deg,#ece6d6,#ddd2b8 40%,#e6dcc4 70%,#d8cfb0)"></div>
<div class="a" style="left:200px;top:400px;width:40px;height:22px;background:#f8f4e8"></div>
<div class="a" style="left:162px;top:512px;width:226px;height:36px;background:linear-gradient(#d8dc30,#e07020)"></div>
<div class="a" style="left:392px;top:290px;width:214px;height:110px;background:linear-gradient(#30b050,#1e8a30)"></div>
<div class="a" style="left:392px;top:405px;width:214px;height:16px;background:#e0a020"></div>
<div class="a" style="left:392px;top:427px;width:214px;height:16px;background:#34a848"></div>
<div class="a" style="left:392px;top:449px;width:214px;height:16px;background:#d04030"></div>
<div class="a" style="left:392px;top:471px;width:214px;height:16px;background:#2a9038"></div>
<div class="a" style="left:392px;top:493px;width:214px;height:16px;background:#c83828"></div>
<div class="a" style="left:392px;top:515px;width:214px;height:30px;background:#208030"></div>
<div class="a" style="left:560px;top:360px;width:30px;height:30px;border-radius:50%;background:#d03030"></div></div></div>
  <div class="a" style="left:22px;top:587px;width:162px;height:123px;background:#fff;box-shadow:0 0 0 1px #cfcfcf;overflow:hidden"><div class="a" style="left:0;top:0;width:767px;height:575px;transform:scale(0.2112,0.2139);transform-origin:0 0"><div class="a" style="left:4px;top:0;width:5px;height:575px;background:#f6cbb8"></div>
<div class="a" style="left:732px;top:0;width:3px;height:575px;background:#f4c5b0"></div>
<div class="a" style="left:740px;top:0;width:24px;height:575px;background:#f9d0be"></div>
<div class="a" style="left:746px;top:0;width:10px;height:575px;background:#f4b090"></div>
<div class="a" style="left:683px;top:479px;width:45px;height:45px;border-radius:50%;background:#fb8a36"></div><div class="t" style="left:30px;top:25px;font-size:37px;font-weight:bold;color:#000;line-height:41px">返校选做实验：实验箱—车载无线通信</div><div class="a" style="left:38px;top:76px;width:690px;height:8px;background:linear-gradient(#c00000,#700000)"></div><div class="t" style="left:55px;top:99.0px;font-size:26px;line-height:28px;color:#000;-webkit-text-stroke:0.5px #000;font-weight:bold;">实验要求：</div><div class="t" style="left:55px;top:132.5px;font-size:19px;line-height:21px;color:#222;-webkit-text-stroke:0.6px #222;">（1）掌握车联网通信原理，掌握通信协议数据结构。</div><div class="t" style="left:55px;top:158.5px;font-size:19px;line-height:21px;color:#222;-webkit-text-stroke:0.6px #222;">（2）掌握实验箱ZigBee模块的基本配置方法。</div><div class="t" style="left:55px;top:184.5px;font-size:19px;line-height:21px;color:#222;-webkit-text-stroke:0.6px #222;">（3）实现配置不同通信协议，实现点对点、多对一、透明传输的无线</div><div class="t" style="left:35px;top:210.5px;font-size:19px;line-height:21px;color:#222;-webkit-text-stroke:0.6px #222;">数据传输。</div></div></div>
  <!-- scrollbar -->
  <div class="a" style="left:205px;top:0;width:15px;height:633px;background:#dbdbdb"></div>
  <div class="a" style="left:205px;top:3px;width:15px;height:14px;background:#fff"></div>
  <svg class="a" style="left:208px;top:7px" width="9" height="6"><path d="M0.5 5.5L4.5 1l4 4.5z" fill="#606060"/></svg>
  <div class="a" style="left:205px;top:82px;width:15px;height:292px;background:#fff;border:1px solid #a8a8a8"></div>
  <div class="a" style="left:205px;top:617px;width:15px;height:15px;background:#fff"></div>
  <svg class="a" style="left:208px;top:622px" width="9" height="6"><path d="M0.5 0.5L4.5 5l4-4.5z" fill="#606060"/></svg>
  <div class="a" style="left:222px;top:0;width:1px;height:635px;background:#c6c6c6"></div>
</div>
<div id="main" class="a">
  <div class="a" style="left:0;top:598px;width:1261px;height:1px;background:#c8c8c8"></div>
  <div class="t" style="left:11px;top:607px;font-size:14.3px;color:#555">单击此处添加备注</div>
</div>
<div class="a" style="left:0;top:784px;width:1500px;height:2px;background:#c4c4c4"></div>
<div class="a" style="left:1485px;top:151px;width:15px;height:633px;background:#dbdbdb"></div>
<div class="a" style="left:1485px;top:153px;width:14px;height:14px;background:#fff"></div>
<svg class="a" style="left:1488px;top:157px" width="9" height="6"><path d="M0.5 5.5L4.5 1l4 4.5z" fill="#606060"/></svg>
<div class="a" style="left:1485px;top:224px;width:14px;height:57px;background:#fff;border:1px solid #a8a8a8"></div>
<div class="a" style="left:1485px;top:680px;width:14px;height:14px;background:#fff"></div>
<svg class="a" style="left:1488px;top:685px" width="9" height="6"><path d="M0.5 0.5L4.5 5l4-4.5z" fill="#606060"/></svg>
<svg class="a" style="left:1487px;top:700px" width="11" height="12"><path d="M1 5.5l4.5-4 4.5 4M1 10.5l4.5-4 4.5 4" fill="none" stroke="#555" stroke-width="1.5"/></svg>
<svg class="a" style="left:1487px;top:715px" width="11" height="12"><path d="M1 1.5l4.5 4 4.5-4M1 6.5l4.5 4 4.5-4" fill="none" stroke="#555" stroke-width="1.5"/></svg>
<div class="a" style="left:1499px;top:151px;width:1px;height:633px;background:#e6e6e6"></div>

<div id="slide" class="a">
  <div class="a" style="left:4px;top:0;width:5px;height:575px;background:#f6cbb8"></div>
  <div class="a" style="left:732px;top:0;width:3px;height:575px;background:#f4c5b0"></div>
  <div class="a" style="left:740px;top:0;width:6px;height:575px;background:#f8cbb8"></div>
  <div class="a" style="left:746px;top:0;width:1px;height:575px;background:#ebb08a"></div>
  <div class="a" style="left:747px;top:0;width:5px;height:575px;background:#fac6b8"></div>
  <div class="a" style="left:752px;top:0;width:2px;height:575px;background:#f7b894"></div>
  <div class="a" style="left:754px;top:0;width:10px;height:575px;background:#f9c8b5"></div>
  <div class="t" id="stitle" style="left:42px;top:28px;font-family:'Liberation Serif',serif;font-size:38px;font-weight:normal;color:#000;line-height:44px;-webkit-text-stroke:0.4px #000">课程简介</div>
  <svg class="a" style="left:38px;top:71px" width="690" height="8" viewBox="0 0 690 8"><defs><linearGradient id="rb" x1="0" y1="0" x2="0" y2="1"><stop offset="0" stop-color="#e00000"/><stop offset="0.45" stop-color="#c80000"/><stop offset="1" stop-color="#700000"/></linearGradient></defs><path d="M0 0H682L689 4 682 8H0z" fill="url(#rb)"/></svg>
  <svg class="a" style="left:31px;top:123px" width="15" height="15" viewBox="0 0 15 15"><path d="M7.5 0.2L14.8 7.5 7.5 14.8 0.2 7.5z" fill="#f27f3a"/></svg>
  <svg class="a" style="left:31px;top:282px" width="15" height="15" viewBox="0 0 15 15"><path d="M7.5 0.2L14.8 7.5 7.5 14.8 0.2 7.5z" fill="#f27f3a"/></svg>
  <div class="a" style="left:683px;top:479px;width:45px;height:45px;border-radius:50%;background:#fb8a36"></div>
  <div class="bl j" style="top:114.6px">本课程涵盖交通类专业的交通工程学、交通管理与控制、</div>
<div class="bl j" style="top:145.4px">自动控制原理、<span style="color:#e81010">汽车电子学</span>、嵌入式技术、C语言程序开</div>
<div class="bl j" style="top:176.4px">发、单片机原理与技术、电工电子学、交通检测技术等，</div>
<div class="bl j" style="top:206.9px">整合交通专业本科所学课程的知识点，讲授当前热门研究</div>
<div class="bl" style="top:237.0px">领域车辆网技术基础知识及应用方法。</div>
<div class="bl j" style="top:273.6px">培养目标：掌握车联网技术相关理论知识和应用技术，巩</div>
<div class="bl j" style="top:304.5px">固本专业领域的相关课程基本知识、基本实践方法，掌握</div>
<div class="bl j" style="top:335.3px">几种常规的无线通信技术原理，学会运用常规技术手段</div>
<div class="bl j" style="top:366.1px">（自动控制系统设计、传感器多元信息融合、单片机开发）</div>
<div class="bl j" style="top:396.3px">来分析、设计实际车联网系统，了解车联网产业链产生的</div>
<div class="bl" style="top:426.5px">社会和经济效益和未来发展趋势。</div>

</div>
<div id="chat" class="a" style="overflow:hidden">
  <div class="a" style="left:0;top:0;width:256px;height:3px;background:#1a1a1a"></div>
  <div class="a" style="left:10px;top:13px;width:58px;height:22px;background:#f4f4f4"></div>
  <div class="a" style="left:10px;top:13px;width:4px;height:22px;background:#e8e0e0"></div>
  <div class="a" style="left:14px;top:13px;width:3px;height:22px;background:#222"></div>
  <div class="a" style="left:50px;top:15px;width:14px;height:3px;background:#8aa0c0"></div>
  <svg class="a" style="left:6px;top:12px" width="66" height="66" viewBox="0 0 66 66">
    <defs><radialGradient id="cg" cx="0.5" cy="0.4" r="0.6"><stop offset="0" stop-color="#f4f6f4"/><stop offset="1" stop-color="#dfe6df"/></radialGradient></defs>
    <circle cx="33" cy="33" r="31.5" fill="url(#cg)" stroke="#8d8d8d" stroke-width="2.5"/>
    <circle cx="33" cy="33" r="29" fill="none" stroke="#8fe0a0" stroke-width="2"/>
    <path d="M33 2.5A30.5 30.5 0 0 1 56 53" fill="none" stroke="#3fcf5f" stroke-width="4"/>
  </svg>
  <div class="t" style="left:21px;top:28px;font-size:23.5px;color:#505050;letter-spacing:-0.5px">39<span style="font-size:13px;letter-spacing:0">%</span></div>
  <svg class="a" style="left:20px;top:55px" width="6" height="8"><path d="M3 1.5v6.5" stroke="#5a9ae0" stroke-width="1.6"/><path d="M0 4L3 0.5 6 4z" fill="#5a9ae0"/></svg>
  <div class="t" style="left:28px;top:55px;font-size:9.5px;color:#444">151K/s</div>
  <div class="t" style="left:79px;top:16px;font-size:12px;color:#dcdcdc">屏幕演示中</div>
  <div class="t" style="left:79px;top:31px;font-size:12px;color:#dcdcdc">00:35:31</div>
  <svg class="a" style="left:173px;top:22px" width="15" height="15" viewBox="0 0 15 15"><path d="M6 1.5h7.5v12H6M1 7.5h9M4 4.5l-3 3 3 3" fill="none" stroke="#c81e1e" stroke-width="1.5"/></svg>
  <div class="t" style="left:194px;top:23px;font-size:12px;color:#c81e1e;font-weight:bold">退出演示</div>
  <div class="a" style="left:237px;top:69px;width:9px;height:1px;background:#aaa"></div>
  <div class="t" style="left:29px;top:115px;font-size:12.5px;color:#efefef">评论</div>
  <div class="t" style="left:115px;top:115px;font-size:12.5px;color:#e0e0e0">发言</div>
  <div class="t" style="left:188px;top:115px;font-size:12.5px;color:#e0e0e0">观看 · 31</div>
  <div class="a" style="left:30px;top:136px;width:22px;height:4px;background:#3a78c8;border-radius:2px"></div>
  <div class="a" style="left:0;top:139px;width:256px;height:2px;background:#1a1a1a"></div>
  <div class="a" style="left:0;top:161px;width:256px;height:497px;overflow:hidden">
    <div class="a" style="left:0;top:-161px;width:256px;height:658px"><div class="t" style="left:15px;top:154px;font-size:12px;color:#8a8a8a;line-height:14px">李家威&nbsp;&nbsp;14:47:37</div><div class="a" style="left:15px;top:175px;height:27px;padding:0 8px;background:#2f2f2f;border-radius:3px;font-size:12px;color:#ececec;line-height:27px;white-space:nowrap">手机怎么全屏</div><div class="t" style="left:15px;top:215px;font-size:12px;color:#8a8a8a;line-height:14px">张静泊&nbsp;&nbsp;14:48:35</div><div class="a" style="left:15px;top:236px;height:27px;padding:0 8px;background:#2f2f2f;border-radius:3px;font-size:12px;color:#ececec;line-height:27px;white-space:nowrap">横过来全屏</div><div class="t" style="left:15px;top:276px;font-size:12px;color:#8a8a8a;line-height:14px">刘湘楠&nbsp;&nbsp;14:49:01</div><div class="a" style="left:15px;top:298px;height:27px;padding:0 8px;background:#2f2f2f;border-radius:3px;font-size:12px;color:#ececec;line-height:27px;white-space:nowrap">把方向锁定打开 横过来就全屏了</div><div class="t" style="left:15px;top:338px;font-size:12px;color:#8a8a8a;line-height:14px">李家威&nbsp;&nbsp;14:49:07</div><div class="a" style="left:15px;top:359px;height:27px;padding:0 8px;background:#2f2f2f;border-radius:3px;font-size:12px;color:#ececec;line-height:27px;white-space:nowrap">ok</div><div class="t" style="left:15px;top:398px;font-size:12px;color:#8a8a8a;line-height:14px">杨建福&nbsp;&nbsp;14:50:12</div><div class="a" style="left:15px;top:420px;height:27px;padding:0 8px;background:#2f2f2f;border-radius:3px;font-size:12px;color:#ececec;line-height:27px;white-space:nowrap">老师，我自己在家可以直接拍电脑么？</div><div class="t" style="left:15px;top:460px;font-size:12px;color:#8a8a8a;line-height:14px">汪威&nbsp;&nbsp;14:50:56</div><div class="a" style="left:15px;top:481px;height:27px;padding:0 8px;background:#2f2f2f;border-radius:3px;font-size:12px;color:#ececec;line-height:27px;white-space:nowrap">黑屏？</div><div class="t" style="left:15px;top:520px;font-size:12px;color:#8a8a8a;line-height:14px">栾皓天&nbsp;&nbsp;14:50:57</div><div class="a" style="left:15px;top:542px;height:27px;padding:0 8px;background:#2f2f2f;border-radius:3px;font-size:12px;color:#ececec;line-height:27px;white-space:nowrap">同问</div><div class="t" style="left:15px;top:581px;font-size:12px;color:#8a8a8a;line-height:14px">周泽淼&nbsp;&nbsp;14:50:59</div><div class="a" style="left:15px;top:603px;height:27px;padding:0 8px;background:#2f2f2f;border-radius:3px;font-size:12px;color:#ececec;line-height:27px;white-space:nowrap">怎么回事？</div></div>
  </div>
</div>

<!-- webcam -->
<div class="a" style="left:1260px;top:0;width:197px;height:119px;background:#111"></div>
<svg class="a" style="left:1260px;top:2px" width="197" height="110" viewBox="0 0 197 110">
  <defs>
    <filter id="bl" x="-10%" y="-10%" width="120%" height="120%"><feGaussianBlur stdDeviation="0.9"/></filter>
    <filter id="bl3" x="-20%" y="-20%" width="140%" height="140%"><feGaussianBlur stdDeviation="3"/></filter>
    <radialGradient id="ceil" cx="0.42" cy="0.05" r="0.75"><stop offset="0" stop-color="#f4f4f4"/><stop offset="0.6" stop-color="#dcdcdc"/><stop offset="1" stop-color="#c4c4c4"/></radialGradient>
    <linearGradient id="rw" x1="0" x2="1"><stop offset="0" stop-color="#d2d5d9"/><stop offset="1" stop-color="#e9ecf0"/></linearGradient>
    <radialGradient id="face" cx="0.5" cy="0.45" r="0.6"><stop offset="0" stop-color="#c7b8b1"/><stop offset="1" stop-color="#a8968f"/></radialGradient>
  </defs>
  <rect width="197" height="110" fill="url(#ceil)"/>
  <g filter="url(#bl)">
    <path d="M0 34 L150 36 L197 4 V110 H0z" fill="#d3d3d3"/>
    <path d="M145 36 L197 2 V110 H145z" fill="url(#rw)"/>
    <path d="M0 18 L14 34 L14 60 L0 60z" fill="#bdbdbd"/>
    <rect x="0" y="56" width="33" height="54" fill="#c9c9c9"/>
    <rect x="2" y="62" width="26" height="10" fill="#909090"/>
    <rect x="6" y="64" width="12" height="8" fill="#555"/>
    <rect x="0" y="74" width="33" height="12" fill="#d8d8d8"/>
    <rect x="0" y="87" width="32" height="13" fill="#857575"/>
    <rect x="0" y="100" width="32" height="10" fill="#d6d6d6"/>
    <rect x="32" y="44" width="50" height="66" fill="#ededed"/>
    <rect x="35" y="48" width="30" height="30" fill="#f6f6f6" stroke="#d8d8d8" stroke-width="1"/>
    <rect x="35" y="82" width="30" height="20" fill="#f3f3f3" stroke="#d8d8d8" stroke-width="1"/>
    <rect x="66" y="56" width="14" height="30" fill="#e4e4e4"/>
    <rect x="70" y="58" width="8" height="26" fill="#fafafa"/>
    <rect x="132" y="50" width="24" height="42" fill="#e4e4e4"/>
    <path d="M152 48 L158 92" stroke="#9a9a9a" stroke-width="1.2"/>
  </g>
  <g filter="url(#bl)">
    <path d="M34 110 C40 96 52 86 78 80 L100 84 L122 80 C150 84 168 94 180 110z" fill="#1f1f1f"/>
    <path d="M150 88 C164 94 176 102 182 110 H156 C156 100 152 94 150 88z" fill="#6c6c6c"/>
    <path d="M34 110 C36 104 40 100 46 98 L48 110z" fill="#b7bfc6"/>
    <path d="M84 78 L102 104 L124 78 L126 88 L103 110 L80 88z" fill="#6a6a6a"/>
    <ellipse cx="108" cy="44" rx="29" ry="26" fill="#2a2a2a"/><path d="M86 60 C86 84 96 94 108 94 C122 94 132 84 132 60z" fill="url(#face)"/>
    <ellipse cx="108" cy="58" rx="24.5" ry="30" fill="url(#face)"/>
    <path d="M82 40 C84 22 94 14 108 14 C124 14 134 24 134 40 C126 34 118 33 108 33 C98 33 90 34 82 40z" fill="#262626"/>
    <path d="M80 50 C80 58 82 62 84 64 L86 48z" fill="#2a2a2a"/>
    <path d="M135 50 C136 58 134 62 132 64 L130 48z" fill="#2a2a2a"/>
    <path d="M86 52 h44" stroke="#5a5050" stroke-width="1.3"/>
    <rect x="88" y="51" width="17" height="9" rx="2" fill="none" stroke="#6a6060" stroke-width="1.1"/>
    <rect x="111" y="51" width="17" height="9" rx="2" fill="none" stroke="#6a6060" stroke-width="1.1"/>
    <ellipse cx="97" cy="56" rx="5" ry="2" fill="#6a5a55"/>
    <ellipse cx="119" cy="56" rx="5" ry="2" fill="#6a5a55"/>
    <path d="M106 60 L104 72 L110 73" fill="none" stroke="#8f7d77" stroke-width="1.3"/>
    <path d="M100 80 C105 82 112 82 116 80" fill="none" stroke="#7a6660" stroke-width="2"/>
    <path d="M94 90 C98 98 104 104 108 110" fill="none" stroke="#e8e8e8" stroke-width="1"/>
    <path d="M124 88 C122 96 118 104 116 110" fill="none" stroke="#d8d8d8" stroke-width="1"/>
  </g>
</svg>
<!-- sogou toolbar -->
<div class="a" style="left:1287px;top:113px;width:178px;height:23px;background:#fff;border:1px solid #d8d8d8"></div>
<svg class="a" style="left:1263px;top:111px" width="30" height="26" viewBox="0 0 30 26"><rect x="3" y="2" width="24" height="22" rx="4" fill="#ea5a1a" transform="rotate(-12 15 13)"/><path d="M21 7.5c-3-1.5-10-1.5-10 2 0 3 9 1.5 9 5 0 3.5-7 3.5-10 2" fill="none" stroke="#fff" stroke-width="3.2"/></svg>
<div class="t" style="left:1297px;top:117px;font-size:15px;font-weight:bold;color:#2a6bbd">中</div>
<svg class="a" style="left:1319px;top:119px" width="13" height="14" viewBox="0 0 13 14"><circle cx="3.5" cy="3.5" r="2.3" fill="none" stroke="#2a6bbd" stroke-width="1.4"/><path d="M9.5 6.5a2 2 0 1 1 0.8 3.5c0 1.5-1 3-2.3 3.5" fill="#2a6bbd" stroke="#2a6bbd" stroke-width="1"/></svg>
<svg class="a" style="left:1338px;top:117px" width="17" height="17" viewBox="0 0 17 17"><circle cx="8.5" cy="8.5" r="7.2" fill="none" stroke="#2a6bbd" stroke-width="1.5"/><circle cx="6" cy="7" r="1" fill="#2a6bbd"/><circle cx="11" cy="7" r="1" fill="#2a6bbd"/><path d="M5 10.5c2 2 5 2 7 0" fill="none" stroke="#2a6bbd" stroke-width="1.3"/></svg>
<svg class="a" style="left:1362px;top:117px" width="13" height="17" viewBox="0 0 13 17"><rect x="4" y="0.5" width="5" height="10" rx="2.5" fill="#2a6bbd"/><path d="M1.5 7a5 5 0 0 0 10 0M6.5 12v4M3.5 16h6" fill="none" stroke="#2a6bbd" stroke-width="1.4"/></svg>
<svg class="a" style="left:1382px;top:119px" width="16" height="12" viewBox="0 0 16 12"><rect x="0.7" y="0.7" width="14.6" height="10.6" rx="1.5" fill="none" stroke="#2a6bbd" stroke-width="1.4"/><path d="M3 4h10M3 6.5h10M4 9h8" stroke="#2a6bbd" stroke-width="1" stroke-dasharray="1.2 0.8"/></svg>
<svg class="a" style="left:1405px;top:117px" width="13" height="16" viewBox="0 0 13 16"><circle cx="5" cy="3.5" r="3" fill="#b8c0c8"/><path d="M0 15v-4a5 5 0 0 1 9-3v7z" fill="#c4cad0"/><rect x="6.5" y="8.5" width="6" height="7" fill="#fff" stroke="#c0c0c0"/></svg>
<svg class="a" style="left:1425px;top:118px" width="14" height="15" viewBox="0 0 14 15"><path d="M4 0.5L0.5 3 2 7 3.5 6.5V14.5h7V6.5L12 7 13.5 3 10 0.5C9 2 5 2 4 0.5z" fill="#2a6bbd"/></svg>
<svg class="a" style="left:1447px;top:118px" width="14" height="14" viewBox="0 0 14 14"><rect x="0.5" y="0.5" width="5.5" height="5.5" rx="1" fill="#2a6bbd"/><rect x="8" y="0.5" width="5.5" height="5.5" rx="1" fill="none" stroke="#2a6bbd" stroke-width="1.2"/><rect x="0.5" y="8" width="5.5" height="5.5" rx="1" fill="#2a6bbd"/><rect x="8" y="8" width="5.5" height="5.5" rx="1" fill="#2a6bbd"/></svg>
<!-- watermark -->
<div class="t" style="left:1289px;top:701px;font-size:62px;font-weight:bold;color:#9a9a9a;letter-spacing:0px;line-height:62px;transform:scale(1.056,0.8);transform-origin:0 0;-webkit-text-stroke:1.6px #9a9a9a">新闻网</div>
<svg class="a" style="left:1193px;top:679px" width="92" height="92" viewBox="0 0 92 92">
  <circle cx="46" cy="46" r="43.6" fill="none" stroke="rgba(205,205,205,0.95)" stroke-width="1.8"/>
  <circle cx="46" cy="46" r="41" fill="none" stroke="rgba(205,205,205,0.35)" stroke-width="0.8"/>
  <path id="ringp" d="M46 46 m-36 0 a36 36 0 1 0 72 0 a36 36 0 1 0 -72 0" fill="none"/>
  <path id="ringt" d="M12 46 a34 34 0 0 1 68 0" fill="none"/>
  <text font-size="6.6" font-weight="bold" fill="rgba(200,200,200,0.95)" font-family="Liberation Sans" letter-spacing="0"><textPath href="#ringp" startOffset="3%">CHINA UNIVERSITY OF TECHNOLOGY</textPath></text>
  <text font-size="9" font-weight="bold" fill="rgba(200,200,200,0.95)" font-family="Liberation Sans" letter-spacing="2.5"><textPath href="#ringt" startOffset="2%">北方工业大学</textPath></text>
  <circle cx="46" cy="46" r="29.5" fill="rgba(206,196,196,0.97)" stroke="rgba(225,225,225,0.9)" stroke-width="1.2"/>
  <path d="M45 21 L33 56 C38 50 42 44 47 40 L58 62 C62 64 68 62 72 60 C64 50 54 36 45 21z" fill="rgba(22,22,22,0.92)"/>
  <path d="M34 60 C42 52 50 48 56 52 L66 64 C58 66 46 64 34 60z" fill="rgba(22,22,22,0.92)"/>
  <path d="M40 54 L50 46 L58 58" fill="none" stroke="rgba(206,196,196,0.95)" stroke-width="2.2"/>
  <circle cx="28" cy="34" r="1.3" fill="rgba(22,22,22,0.9)"/>
  <text x="36" y="72" font-size="4.5" fill="rgba(40,40,40,0.8)" font-family="Liberation Sans" font-weight="bold">1946</text>
</svg>
<svg class="a" style="left:1484px;top:139px" width="9" height="7"><path d="M0.5 6l4-5 4 5" fill="none" stroke="#666" stroke-width="1"/></svg>
</body></html>
